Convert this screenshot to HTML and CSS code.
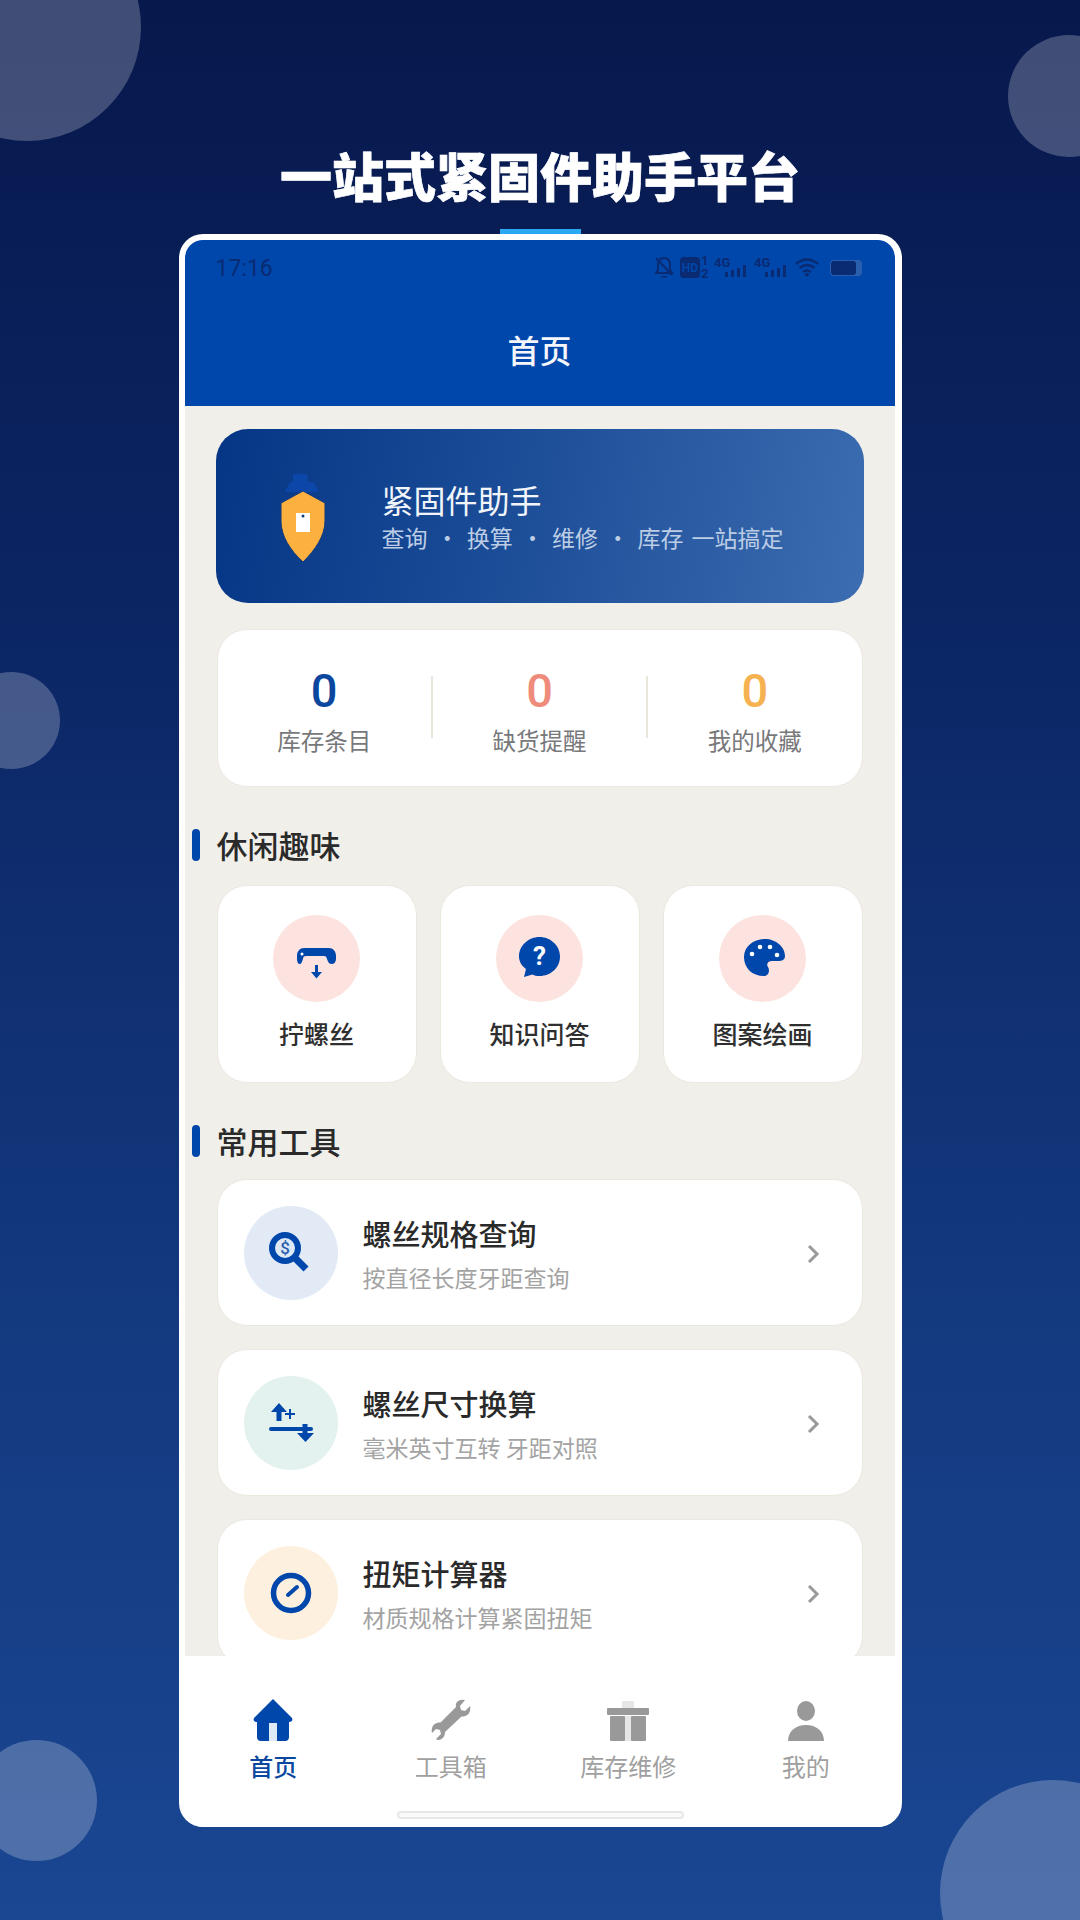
FILE: index.html
```html
<!DOCTYPE html>
<html lang="zh-CN">
<head>
    <meta charset="UTF-8">
    <meta name="viewport" content="width=device-width, initial-scale=1.0">
    <title>紧固件助手</title>
    <link rel="stylesheet" href="styles.css">
</head>

<body>
    <svg class="blobs" width="1080" height="1920" viewBox="0 0 1080 1920">
        <circle cx="27" cy="27" r="114"/>
        <circle cx="1069" cy="96" r="61"/>
        <circle cx="11.500" cy="720.500" r="48.500"/>
        <circle cx="36.500" cy="1800.500" r="60.500"/>
        <circle cx="1053" cy="1893" r="113"/>
    </svg>

    <h1 class="headline">一站式紧固件助手平台</h1>
    <div class="accent"></div>

    <div class="phone">
        <header class="top">
            <div class="status">
                <span class="clock">17:16</span>
                <svg class="statusIcons" width="208" height="32" viewBox="0 -4 208 32" fill="#0a2a72">
                    <path d="M9 2c-4 0-6 3-6 7v5l-2 3h16l-2-3V9c0-4-2-7-6-7z" fill="none" stroke="#0a2a72" stroke-width="2"/>
                    <path d="M1 2l16 17" stroke="#0a2a72" stroke-width="2"/>
                    <path d="M6 20h6v1.500H6z"/>
                    <rect x="25" y="1" width="20" height="21" rx="4"/>
                    <text x="35" y="16" class="hd">HD</text>
                    <text x="46" y="9" class="tiny">1</text>
                    <text x="46" y="22" class="tiny">2</text>
                    <text x="59" y="11" class="tiny">4G</text>
                    <rect x="70" y="16" width="3" height="5"/><rect x="76" y="14" width="3" height="7"/><rect x="82" y="12" width="3" height="9"/><rect x="88" y="9" width="3" height="12"/>
                    <text x="99" y="11" class="tiny">4G</text>
                    <rect x="110" y="16" width="3" height="5"/><rect x="116" y="14" width="3" height="7"/><rect x="122" y="12" width="3" height="9"/><rect x="128" y="9" width="3" height="12"/>
                    <path d="M141 8q11-9 22 0M144.500 12q7.500-6 15 0M148 16q4-3 8 0" fill="none" stroke="#0a2a72" stroke-width="2.500"/>
                    <path d="M149.500 18.500l2.500-2 2.500 2-2.500 2.500z"/>
                    <rect x="175" y="4" width="32" height="16" rx="4" fill="#2a5fb0"/>
                    <rect x="176" y="5" width="25" height="14" rx="3"/>
                </svg>
            </div>
            <h2 class="pageTitle">首页</h2>
        </header>

        <main class="content">
            <section class="banner">
                <svg class="shield" width="46" height="89" viewBox="0 0 46 89">
                    <path d="M13 1h14l1 8h6l5 10H5l5-10h3z" fill="#0b46a8"/>
                    <path d="M23 18L45 30v18c0 15-10 29-22 41C10 77 1 63 1 48V30z" fill="#fbb040" stroke="#123a7c" stroke-width="1"/>
                    <rect x="16" y="40" width="14" height="19" fill="#fff"/>
                    <circle cx="23" cy="43" r="1.500" fill="#123a7c"/>
                </svg>
                <div class="bannerText">
                    <div class="bannerTitle">紧固件助手</div>
                    <div class="bannerSub">查询 · 换算 · 维修 · 库存 一站搞定</div>
                </div>
            </section>

            <section class="stats">
                <div class="stat">
                    <div class="num blue">0</div>
                    <div class="statLabel">库存条目</div>
                </div>
                <div class="divider"></div>
                <div class="stat">
                    <div class="num red">0</div>
                    <div class="statLabel">缺货提醒</div>
                </div>
                <div class="divider"></div>
                <div class="stat">
                    <div class="num orange">0</div>
                    <div class="statLabel">我的收藏</div>
                </div>
            </section>

            <h3 class="sectionTitle">休闲趣味</h3>
            <section class="funGrid">
                <div class="funCard">
                    <div class="funIcon">
                        <svg width="87" height="87" viewBox="0 0 87 87">
                            <path d="M24 41c0-5 3-8 7-8h25c4 0 7 3 7 8v3c0 3-2 5-4 5-3 0-4-2-5-5-.5-2-1-3-3-3H33c-2 0-3 1-3 3-1 3-2 5-3 5-2 0-3-2-3-5z" fill="#0047ab"/>
                            <circle cx="29" cy="39" r="1.500" fill="#fff"/>
                            <path d="M42 50h3v7h4l-5.500 6.500L38 57h4z" fill="#0047ab"/>
                        </svg>
                    </div>
                    <div class="funLabel">拧螺丝</div>
                </div>
                <div class="funCard">
                    <div class="funIcon">
                        <svg width="87" height="87" viewBox="0 0 87 87">
                            <path d="M43.500 22c11 0 20.500 8.500 20.500 19.500S55 61 43.500 61c-3 0-5-.5-7-1.500L28 62l2-8c-4-3-7-7-7-12.500C23 30.500 32.500 22 43.500 22z" fill="#0047ab"/>
                            <text x="43.500" y="50" class="qmark">?</text>
                        </svg>
                    </div>
                    <div class="funLabel">知识问答</div>
                </div>
                <div class="funCard">
                    <div class="funIcon">
                        <svg width="87" height="87" viewBox="0 0 87 87">
                            <g transform="translate(2 7)">
                                <path d="M44 17c11 0 20 8 20 17 0 4-3 5-7 5h-6c-4 0-6 3-4 6 2 3 1 9-4 9-12 0-20-8-20-19s10-18 21-18z" fill="#0047ab"/>
                                <circle cx="31" cy="32" r="2.300" fill="#fff"/>
                                <circle cx="39" cy="25" r="2.300" fill="#fff"/>
                                <circle cx="49" cy="25" r="2.300" fill="#fff"/>
                                <circle cx="56" cy="33" r="2.300" fill="#fff"/>
                            </g>
                        </svg>
                    </div>
                    <div class="funLabel">图案绘画</div>
                </div>
            </section>

            <h3 class="sectionTitle second">常用工具</h3>
            <section class="tools">
                <div class="toolRow">
                    <div class="toolIcon tintBlue">
                        <svg width="94" height="94" viewBox="0 0 94 94">
                            <circle cx="41" cy="42" r="13" fill="#dfe9f6" stroke="#0047ab" stroke-width="6"/>
                            <path d="M51 52l11 11" stroke="#0047ab" stroke-width="7"/>
                            <text x="41" y="48" class="dollar">$</text>
                        </svg>
                    </div>
                    <div class="toolText">
                        <div class="toolName">螺丝规格查询</div>
                        <div class="toolDesc">按直径长度牙距查询</div>
                    </div>
                    <svg class="chevron" width="14" height="20" viewBox="0 0 14 20"><path d="M3 2l8 8-8 8" fill="none" stroke="#999" stroke-width="3"/></svg>
                </div>
                <div class="toolRow">
                    <div class="toolIcon tintGreen">
                        <svg width="94" height="94" viewBox="0 0 94 94">
                            <path d="M35 27l8 9h-5.500v9h-5v-9H27z" fill="#0047ab"/>
                            <path d="M41 38h10M46 33v10" stroke="#0047ab" stroke-width="2"/>
                            <path d="M27 53h40" stroke="#0047ab" stroke-width="4" stroke-linecap="round"/>
                            <path d="M58.500 48h5v9H70l-8.500 9-8.500-9h5.500z" fill="#0047ab"/>
                        </svg>
                    </div>
                    <div class="toolText">
                        <div class="toolName">螺丝尺寸换算</div>
                        <div class="toolDesc">毫米英寸互转 牙距对照</div>
                    </div>
                    <svg class="chevron" width="14" height="20" viewBox="0 0 14 20"><path d="M3 2l8 8-8 8" fill="none" stroke="#999" stroke-width="3"/></svg>
                </div>
                <div class="toolRow">
                    <div class="toolIcon tintOrange">
                        <svg width="94" height="94" viewBox="0 0 94 94">
                            <circle cx="47" cy="47" r="17.500" fill="none" stroke="#0047ab" stroke-width="5.500"/>
                            <path d="M44 49l9-8" stroke="#0047ab" stroke-width="4" stroke-linecap="round"/>
                        </svg>
                    </div>
                    <div class="toolText">
                        <div class="toolName">扭矩计算器</div>
                        <div class="toolDesc">材质规格计算紧固扭矩</div>
                    </div>
                    <svg class="chevron" width="14" height="20" viewBox="0 0 14 20"><path d="M3 2l8 8-8 8" fill="none" stroke="#999" stroke-width="3"/></svg>
                </div>
            </section>
        </main>

        <nav class="tabs">
            <div class="tab active">
                <svg width="44" height="44" viewBox="0 0 44 44">
                    <path d="M22 1L41 20c1 2 0 4-3 4v15c0 2-1 4-4 4H10c-3 0-4-2-4-4V24c-3 0-4-2-3-4z" fill="#0047ab"/>
                    <rect x="18" y="25" width="8" height="18" fill="#deeaf6"/>
                </svg>
                <span>首页</span>
            </div>
            <div class="tab">
                <svg width="44" height="44" viewBox="0 0 44 44">
                    <path d="M36 2l-5 6 1 4 4 1 5-5c1 5-1 9-5 10-2 1-3 0-4 1L16 34c0 4-2 7-6 8-1 0-2 0-3-1l5-5-1-4-4-1-4 4c-1-5 1-9 5-10 2-1 3 0 4-1l15-15c-1-5 3-8 9-7z" fill="#999"/>
                </svg>
                <span>工具箱</span>
            </div>
            <div class="tab">
                <svg width="44" height="44" viewBox="0 0 44 44">
                    <rect x="16" y="3" width="12" height="9" fill="#e6e6e6"/>
                    <rect x="1" y="10" width="42" height="7" rx="1" fill="#999"/>
                    <rect x="4" y="18" width="15" height="25" rx="1" fill="#999"/>
                    <rect x="25" y="18" width="15" height="25" rx="1" fill="#999"/>
                    <rect x="19" y="18" width="6" height="25" fill="#e6e6e6"/>
                </svg>
                <span>库存维修</span>
            </div>
            <div class="tab">
                <svg width="44" height="44" viewBox="0 0 44 44">
                    <ellipse cx="22" cy="13" rx="9" ry="10" fill="#999"/>
                    <path d="M4 43c0-10 8-16 18-16s18 6 18 16z" fill="#999"/>
                </svg>
                <span>我的</span>
            </div>
            <div class="homeBar"></div>
        </nav>
    </div>
</body>
</html>
```

FILE: styles.css
```css
* {
    box-sizing: border-box;
    font-family: "Noto Sans CJK SC", "Noto Sans", sans-serif;
}
html, body {
    margin: 0;
    padding: 0;
}
body {
    position: relative;
    display: flex;
    flex-direction: column;
    align-items: center;
    width: 1080px;
    height: 1920px;
    overflow: hidden;
    background: linear-gradient(180deg, #07184c 0%, #0c2766 35%, #143a80 70%, #1a4692 100%);
}

/* background circles */
.blobs {
    position: absolute;
    left: 0;
    top: 0;
}
.blobs circle {
    fill: rgba(255, 255, 255, 0.23);
}

.headline {
    position: relative;
    margin: 135px 0 0;
    font-size: 52px;
    line-height: 80px;
    font-weight: 900;
    color: #fff;
    -webkit-text-stroke: 0.7px #fff;
}
.accent {
    position: relative;
    width: 81px;
    height: 5px;
    margin-top: 14px;
    background-color: #2aa9f2;
}

.phone {
    position: relative;
    display: flex;
    flex-direction: column;
    width: 723px;
    height: 1593px;
    border: 6px solid #fff;
    border-right-width: 7px;
    border-bottom: none;
    border-radius: 24px;
    overflow: hidden;
    background-color: #fff;
}

.top {
    flex: none;
    height: 166px;
    border-radius: 16px 16px 0 0;
    background-color: #0047ab;
}
.status {
    display: flex;
    align-items: center;
    justify-content: space-between;
    height: 52px;
    padding: 4px 32px 0 31px;
}
.clock {
    font-size: 23px;
    color: #0a2a72;
    font-family: "Roboto", sans-serif;
}
.statusIcons text {
    font-family: "Roboto", sans-serif;
    font-weight: 700;
}
.statusIcons .hd {
    font-size: 12px;
    fill: #0047ab;
    text-anchor: middle;
}
.statusIcons .tiny {
    font-size: 13px;
}
.pageTitle {
    margin: 0;
    height: 114px;
    line-height: 114px;
    text-align: center;
    font-size: 32px;
    font-weight: 500;
    color: #f4f6fb;
}

.content {
    flex: 1;
    min-height: 0;
    overflow: hidden;
    padding: 23px 32px 0;
    background-color: #f1efe9;
}

.banner {
    display: flex;
    align-items: center;
    height: 174px;
    margin: 0 -1px;
    padding: 0 0 0 64px;
    border-radius: 32px;
    background: linear-gradient(100deg, #053686 0%, #1e4f99 50%, #3c6db1 100%);
}
.shield {
    flex: none;
    margin-top: 2px;
}
.bannerText {
    margin-left: 56px;
}
.bannerTitle {
    font-size: 32px;
    line-height: 42px;
    color: #f2f5fa;
}
.bannerSub {
    font-size: 23px;
    line-height: 34px;
    word-spacing: 3px;
    color: #bccde5;
}

.stats {
    display: flex;
    align-items: center;
    height: 158px;
    margin-top: 26px;
    border: 1px solid #ebe8df;
    border-radius: 30px;
    background-color: #fff;
}
.stat {
    flex: 1;
    padding-top: 3px;
    text-align: center;
}
.num {
    font-family: "Roboto", sans-serif;
    font-size: 47px;
    font-weight: 500;
    line-height: 56px;
}
.blue {
    color: #0b479f;
}
.red {
    color: #ee8b7a;
}
.orange {
    color: #f6b250;
}
.statLabel {
    margin-top: 5px;
    font-size: 23.500px;
    line-height: 32px;
    color: #77787a;
}
.divider {
    flex: none;
    width: 2px;
    height: 62px;
    margin-top: -3px;
    background-color: #e9e6dc;
}

.sectionTitle {
    position: relative;
    margin: 42px 0 0;
    height: 32px;
    line-height: 32px;
    font-size: 31px;
    font-weight: 500;
    color: #2a2a2a;
}
.sectionTitle::before {
    content: "";
    position: absolute;
    left: -25px;
    top: 0;
    width: 8px;
    height: 32px;
    border-radius: 4px;
    background-color: #0047ab;
}
.second {
    margin-top: 42px;
}

.funGrid {
    display: grid;
    grid-template-columns: repeat(3, 1fr);
    gap: 23px;
    margin-top: 24px;
}
.funCard {
    display: flex;
    flex-direction: column;
    align-items: center;
    height: 198px;
    padding-top: 29px;
    border: 1px solid #ebe8df;
    border-radius: 30px;
    background-color: #fff;
}
.funIcon {
    width: 87px;
    height: 87px;
    border-radius: 50%;
    background-color: #fce3e0;
}
.funIcon svg {
    display: block;
}
.funIcon .qmark {
    font-family: "Roboto", sans-serif;
    font-size: 26px;
    font-weight: 700;
    fill: #fff;
    text-anchor: middle;
}
.funLabel {
    margin-top: 13px;
    font-size: 25px;
    line-height: 36px;
    font-weight: 500;
    color: #2f2f2f;
}

.tools {
    display: flex;
    flex-direction: column;
    gap: 23px;
    margin-top: 22px;
}
.toolRow {
    flex: none;
    display: flex;
    align-items: center;
    height: 147px;
    padding: 0 42px 0 26px;
    border: 1px solid #ebe8df;
    border-radius: 30px;
    background-color: #fff;
}
.toolIcon {
    flex: none;
    width: 94px;
    height: 94px;
    border-radius: 50%;
}
.toolIcon svg {
    display: block;
}
.toolIcon .dollar {
    font-family: "Roboto", sans-serif;
    font-size: 17px;
    font-weight: 500;
    fill: #2a5fb0;
    text-anchor: middle;
}
.tintBlue {
    background-color: #e2eaf6;
}
.tintGreen {
    background-color: #e3f2ee;
}
.tintOrange {
    background-color: #fdf0de;
}
.toolText {
    flex: 1;
    margin-left: 25px;
}
.toolName {
    font-size: 29px;
    line-height: 40px;
    font-weight: 500;
    color: #2a2a2a;
}
.toolDesc {
    margin-top: 8px;
    font-size: 23px;
    line-height: 32px;
    color: #a3a3a3;
}
.chevron {
    flex: none;
    margin-top: 2px;
}

.tabs {
    position: relative;
    flex: none;
    display: grid;
    grid-template-columns: repeat(4, 1fr);
    height: 171px;
    padding-top: 42px;
    background-color: #fff;
}
.tab {
    display: flex;
    flex-direction: column;
    align-items: center;
    font-size: 24px;
    line-height: 34px;
    color: #a0a0a0;
}
.tab svg {
    flex: none;
}
.tab span {
    margin-top: 7px;
}
.tab.active {
    color: #0b479f;
    font-weight: 500;
}
.homeBar {
    position: absolute;
    left: 212px;
    bottom: 8px;
    width: 287px;
    height: 8px;
    border: 2px solid #e8e8e8;
    border-radius: 4px;
    background-color: #fafafa;
}
```
